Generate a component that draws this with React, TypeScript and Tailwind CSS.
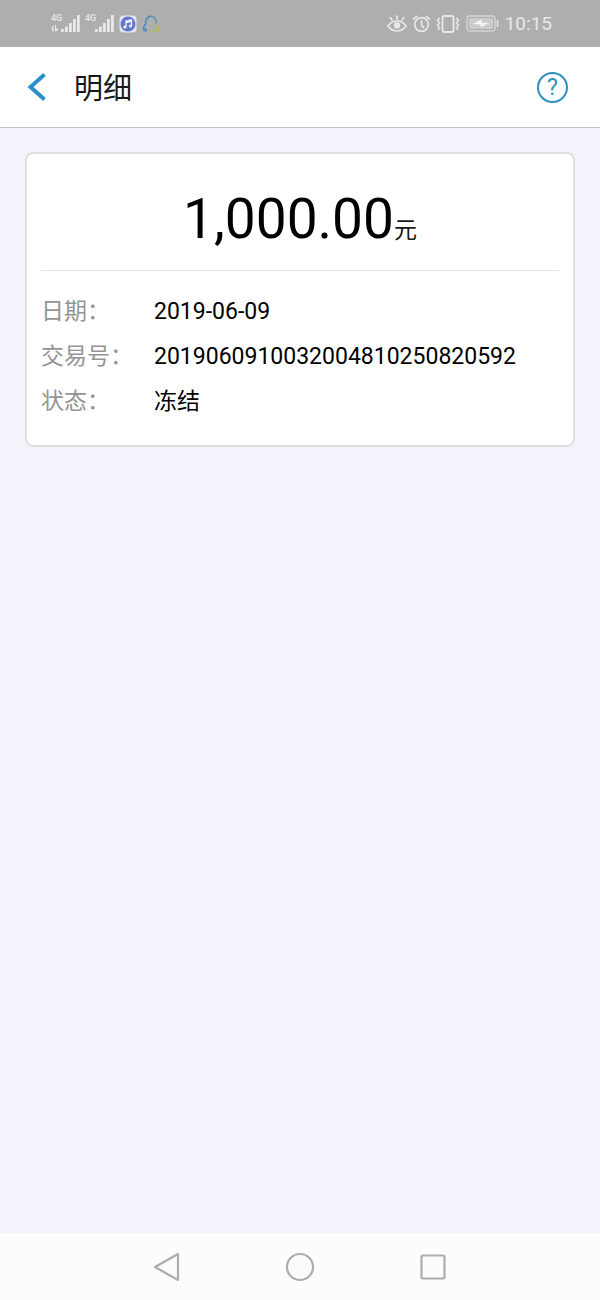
import type { ReactNode } from "react";

interface DetailRow {
  label: string;
  value: string;
}

const rows: DetailRow[] = [
  { label: "日期", value: "2019-06-09" },
  { label: "交易号", value: "2019060910032004810250820592" },
  { label: "状态", value: "冻结" },
];

const Signal = ({ data }: { data?: boolean }) => (
  <div className="relative h-5 w-[29px]">
    <span className="absolute left-0 top-0 text-[9px] font-medium leading-[9px]">4G</span>
    <svg className="absolute inset-0" width="29" height="20" viewBox="0 0 29 20" fill="currentColor">
      {data && <path d="M0 14.500L2.500 11v6.500H1V14.500zM5 11v3.500h3L5 17.500l-1 0V11z" />}
      <path d="M10 15h2.800v3H10zM14 12.500h2.800V18H14zM18 9h2.800v9H18zM22 5h2.800v13H22zM26 1h2.800v17H26z" />
    </svg>
  </div>
);

const StatusBar = () => (
  <div className="flex h-[47px] items-center justify-between bg-[#aeaeae] pl-[51px] pr-12 text-[#e8e8e8]">
    <div className="flex items-center gap-[5px]">
      <Signal data />
      <Signal />
      {/* music */}
      <svg width="18" height="18" viewBox="0 0 18 18">
        <rect x="0.500" y="0.500" width="17" height="17" rx="4" fill="#e4e4f2" />
        <circle cx="9" cy="9" r="7.500" fill="#6478cb" />
        <path d="M7 12V6l5.500-1.200v6M7 7.500l5.500-1.200" stroke="#f1f2fb" strokeWidth="1.300" fill="none" />
        <circle cx="5.900" cy="12" r="1.500" fill="#f1f2fb" />
        <circle cx="11.400" cy="11" r="1.500" fill="#f1f2fb" />
      </svg>
      {/* messenger */}
      <svg width="18" height="18" viewBox="0 0 18 18" fill="none" strokeWidth="1.500" strokeLinecap="round">
        <path d="M3.500 16.500c1-1 .6-1.800 0-2.700L1.800 15C1 13 2 10.800 3.600 9 3.300 4.500 5.500 1.300 9 1.300" stroke="#4589b8" />
        <path d="M9 1.300c3.600 0 5.800 3.200 5.200 7.700" stroke="#5c95ab" />
        <path d="M14.200 9c1.800 1.800 2.500 4 1.700 6l-1.600-1.200c-.7 1-1 1.700 0 2.700-2 .6-3.500.2-4.500-.7" stroke="#b7ba52" />
      </svg>
    </div>
    <div className="flex items-center">
      <svg width="20" height="20" viewBox="0 0 20 20" fill="none" stroke="currentColor" strokeWidth="1.700" strokeLinecap="round">
        <path d="M1 12c2.300-3.300 5.500-5 9-5s6.700 1.700 9 5c-2.300 3.300-5.500 5-9 5s-6.700-1.700-9-5zM10 5V2M5 6L3.200 3.600M15 6l1.800-2.400" />
        <circle cx="10" cy="11.500" r="3.200" fill="currentColor" stroke="none" />
      </svg>
      <svg className="ml-[5px]" width="19" height="20" viewBox="0 0 19 20" fill="none" stroke="currentColor" strokeWidth="1.700" strokeLinecap="round">
        <circle cx="9.500" cy="10.500" r="6.800" />
        <path d="M9.500 7v4l2 2.500M1.500 5l3.300-2.700M17.500 5l-3.300-2.700" />
      </svg>
      <svg className="ml-[5px]" width="24" height="20" viewBox="0 0 24 20" fill="none" stroke="currentColor" strokeWidth="1.800">
        <rect x="6.500" y="2" width="11" height="16" rx="2" />
        <path d="M3.500 4L1.500 6.500l2 2-2 3 2 2-1.500 2.500M20.500 4l2 2.500-2 2 2 3-2 2 1.500 2.500" strokeWidth="1.600" />
      </svg>
      <svg className="ml-1.5" width="33" height="17" viewBox="0 0 33 17" fill="none" stroke="currentColor">
        <rect x="1" y="1" width="28" height="15" rx="2" strokeWidth="1" />
        <rect x="3" y="3" width="24" height="11" rx="1" fill="#cbcbcb" stroke="none" />
        <path d="M7 9l8-4.500.5 3L23 8l-8 4.500-.5-3z" fill="#f4f4f4" stroke="none" />
        <path d="M31.500 5v7" strokeWidth="1.600" />
      </svg>
      <span className="ml-1.5 text-[19px] leading-6">10:15</span>
    </div>
  </div>
);

const NavButton = ({ label, children }: { label: string; children: ReactNode }) => (
  <button aria-label={label} className="flex h-full items-center justify-center">
    <svg width="30" height="30" viewBox="0 0 30 30" fill="none" stroke="#adadad" strokeWidth="2.200" strokeLinejoin="round">
      {children}
    </svg>
  </button>
);

export default function App() {
  return (
    <div className="flex min-h-screen flex-col bg-[#f4f3fb] font-[Roboto,'Noto_Sans_CJK_SC',sans-serif] text-black">
      <StatusBar />

      <header className="flex h-[81px] items-center border-b border-[#c4c4c8] bg-white pl-[27px] pr-8">
        <button aria-label="返回">
          <svg width="20" height="28" viewBox="0 0 20 28" fill="none" stroke="#2b8fca" strokeWidth="4">
            <path d="M17.500 1.500L3.500 14l14 12.500" />
          </svg>
        </button>
        <h1 className="ml-[27px] pt-1 text-[29px] leading-10 text-[#181818]">明细</h1>
        <button
          aria-label="帮助"
          className="ml-auto flex size-[31px] items-center justify-center rounded-full border-2 border-[#2f8fbd] pt-0.5 text-[23px] leading-6 text-[#2f8fbd]"
        >
          ?
        </button>
      </header>

      <main className="flex-1 px-[25px] py-6">
        <section className="rounded-lg border-2 border-[#dfdfe2] bg-white px-3.5 pb-[21px]">
          <div className="flex h-[117px] items-baseline justify-center border-b border-[#e4e4e4] pt-8">
            <span className="text-[55px] leading-[66px]">1,000.00</span>
            <span className="text-[23px] leading-8 text-[#181818]">元</span>
          </div>
          <dl className="mt-[18px]">
            {rows.map((row) => (
              <div key={row.label} className="flex h-[45px] items-center text-[23px] leading-8">
                <dt className="w-[113px] shrink-0 text-[#949494]">{row.label}：</dt>
                <dd>{row.value}</dd>
              </div>
            ))}
          </dl>
        </section>
      </main>

      <nav className="grid h-[67px] grid-cols-3 bg-[#fcfcfc] px-[100px]">
        <NavButton label="后退">
          <path d="M3 15L26 2v26z" />
        </NavButton>
        <NavButton label="主页">
          <circle cx="15" cy="15" r="13" />
        </NavButton>
        <NavButton label="最近任务">
          <rect x="3.500" y="3.500" width="23" height="23" rx="1" />
        </NavButton>
      </nav>
    </div>
  );
}
